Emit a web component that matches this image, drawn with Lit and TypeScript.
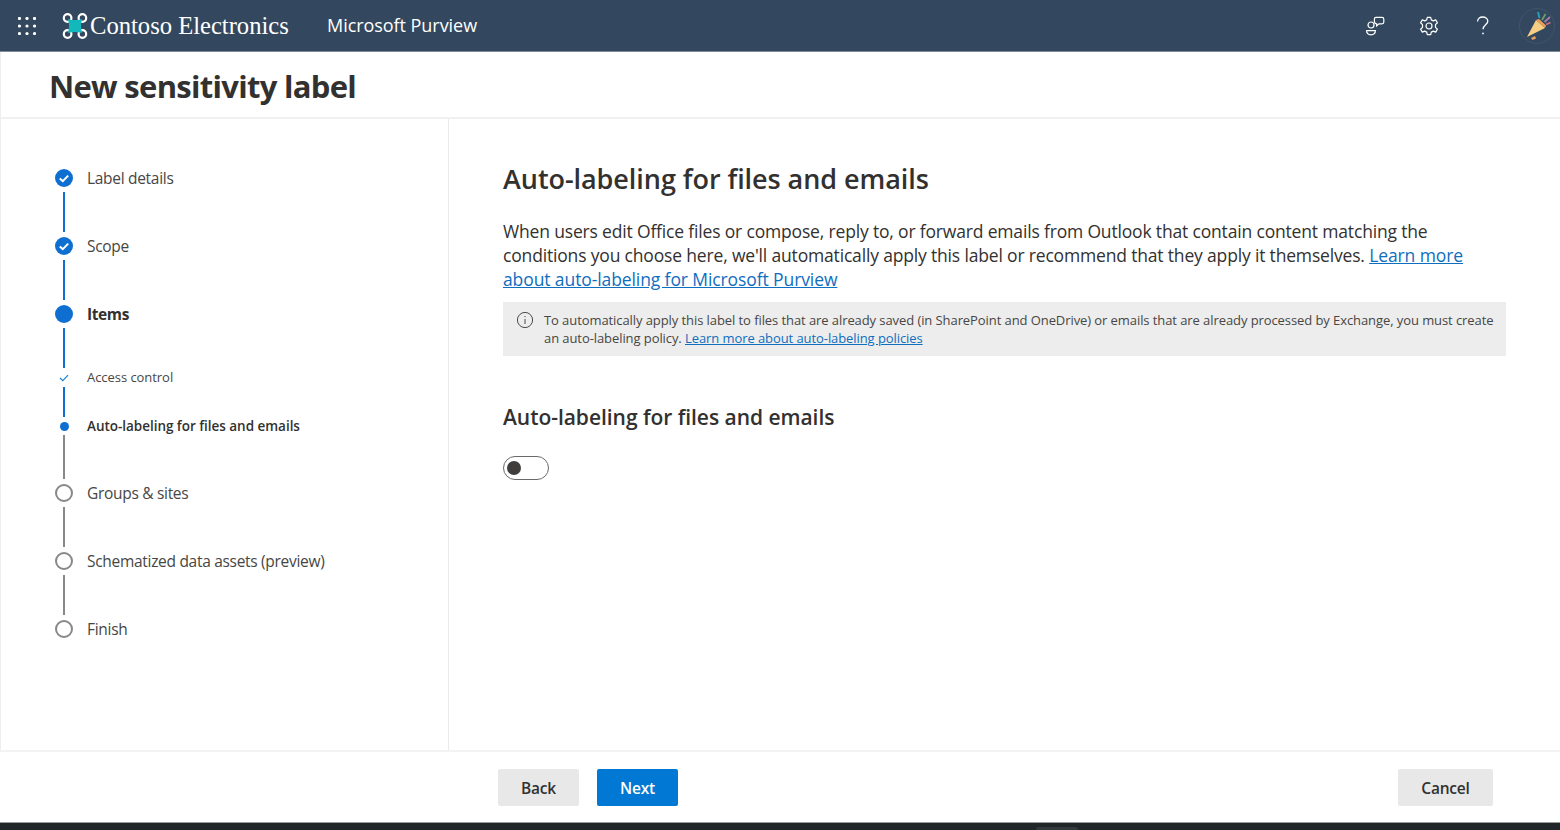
import { html, css, LitElement, svg } from "lit";
import { customElement } from "lit/decorators.js";

interface stepConfig {
  label: string;
  kind: "done" | "current" | "todo" | "subdone" | "subcurrent";
  line?: "blue" | "blue-short" | "blue-tight" | "grey" | "grey-sub";
}

const STEPS: stepConfig[] = [
  { label: "Label details", kind: "done", line: "blue" },
  { label: "Scope", kind: "done", line: "blue" },
  { label: "Items", kind: "current", line: "blue-tight" },
  { label: "Access control", kind: "subdone", line: "blue-short" },
  { label: "Auto-labeling for files and emails", kind: "subcurrent", line: "grey-sub" },
  { label: "Groups & sites", kind: "todo", line: "grey" },
  { label: "Schematized data assets (preview)", kind: "todo", line: "grey" },
  { label: "Finish", kind: "todo" },
];

const waffle = svg`<svg width="18" height="18" viewBox="0 0 18 18" fill="#fff">
  ${[1.5, 9, 16.5].flatMap((y) =>
    [1.5, 9, 16.5].map((x) => svg`<circle cx=${x} cy=${y} r="1.6"></circle>`)
  )}
</svg>`;

const logo = svg`<svg width="26" height="28" viewBox="0 0 26 28" fill="none">
  <circle cx="5.6" cy="6" r="3.8" stroke="#fff" stroke-width="2.2"></circle>
  <circle cx="20.4" cy="6" r="3.8" stroke="#fff" stroke-width="2.2"></circle>
  <circle cx="5.6" cy="22" r="3.8" stroke="#fff" stroke-width="2.2"></circle>
  <circle cx="20.4" cy="22" r="3.8" stroke="#fff" stroke-width="2.2"></circle>
  <path d="M7 8 C10 9.2 16 9.2 19 8 C17.8 11 17.8 17 19 20 C16 18.8 10 18.8 7 20 C8.2 17 8.2 11 7 8 Z" fill="#12b8bb" stroke="#12b8bb" stroke-width="1.8" stroke-linejoin="round"></path>
</svg>`;

const people = svg`<svg width="20" height="20" viewBox="0 0 20 20" fill="none" stroke="#fff" stroke-width="1.2">
  <circle cx="6" cy="9" r="3"></circle>
  <path d="M1.6 14.6 H10.4 C10.4 17.6 8.4 18.8 6 18.8 C3.6 18.8 1.6 17.6 1.6 14.6 Z"></path>
  <path d="M11 1.4 H17 A1.8 1.8 0 0 1 18.8 3.2 V6 A1.8 1.8 0 0 1 17 7.8 H14 L11.6 10 V7.8 A2.4 2.4 0 0 1 9.4 5.6 V3 A1.6 1.6 0 0 1 11 1.4 Z"></path>
</svg>`;

const gear = svg`<svg width="20" height="20" viewBox="0 0 20 20" fill="none" stroke="#fff" stroke-width="1.2">
  <circle cx="10" cy="10" r="3"></circle>
  <path d="M8.3 1.3 H11.7 L12.3 3.9 L14.3 4.9 L16.7 3.9 L18.4 6.8 L16.5 8.6 V11.4 L18.4 13.2 L16.7 16.1 L14.3 15.1 L12.3 16.1 L11.7 18.7 H8.3 L7.7 16.1 L5.7 15.1 L3.3 16.1 L1.6 13.2 L3.5 11.4 V8.6 L1.6 6.8 L3.3 3.9 L5.7 4.9 L7.7 3.9 Z" stroke-linejoin="round"></path>
</svg>`;

const help = svg`<svg width="14" height="20" viewBox="0 0 14 20" fill="none" stroke="#fff" stroke-width="1.3">
  <path d="M1.6 5.4 C1.6 2.8 3.8 1 6.6 1 C9.6 1 11.8 2.9 11.8 5.3 C11.8 8.6 7 9 7 13.2"></path>
  <circle cx="7" cy="17.4" r=".9" fill="#fff" stroke="none"></circle>
</svg>`;

const party = svg`<svg width="36" height="36" viewBox="0 0 36 36" fill="none">
  <circle cx="18" cy="18" r="17.5" stroke="#3f566c"></circle>
  <path d="M8 29 L17 12 L26 20 Z" fill="#f6cf85"></path>
  <path d="M17 12 L26 20 L27 17.5 L20 11 Z" fill="#e9a05c"></path>
  <path d="M12 30 L16 28 L17 30.5 L13.5 32 Z" fill="#e9a05c"></path>
  <path d="M20.5 10 L19 4" stroke="#2aa1b8" stroke-width="1.8"></path>
  <path d="M23 12 L26.5 6" stroke="#6f9c6a" stroke-width="1.8"></path>
  <path d="M25.5 14 L31 9" stroke="#a87ab0" stroke-width="1.8"></path>
  <path d="M27 16.5 L31.5 14.5" stroke="#cf6f86" stroke-width="1.5"></path>
</svg>`;

const check = svg`<svg width="18" height="18" viewBox="0 0 18 18">
  <circle cx="9" cy="9" r="9" fill="#0f6fd1"></circle>
  <path d="M4.8 9.4 L7.8 12.2 L13.2 6.6" fill="none" stroke="#fff" stroke-width="2"></path>
</svg>`;

const smallCheck = svg`<svg width="10" height="8" viewBox="0 0 10 8">
  <path d="M1 4 L3.8 6.6 L9 1.2" fill="none" stroke="#1a82d8" stroke-width="1.2"></path>
</svg>`;

const info = svg`<svg width="18" height="18" viewBox="0 0 18 18" fill="none" stroke="#4a4a4a" stroke-width="1">
  <circle cx="9" cy="9" r="7.6"></circle>
  <path d="M9 8 V13"></path>
  <circle cx="9" cy="5.6" r=".7" fill="#4a4a4a" stroke="none"></circle>
</svg>`;

@customElement("app-root")
export class AppRoot extends LitElement {
  renderNode(kind: stepConfig["kind"]) {
    if (kind === "done") return check;
    if (kind === "subdone") return smallCheck;
    return html`<span class="dot ${kind}"></span>`;
  }

  render() {
    return html`
      <header class="topbar">
        <span class="waffle">${waffle}</span>
        <span class="logo">${logo}</span>
        <span class="brand">Contoso Electronics</span>
        <span class="product">Microsoft Purview</span>
        <span class="spacer"></span>
        <span class="tool">${people}</span>
        <span class="tool">${gear}</span>
        <span class="tool">${help}</span>
        <span class="avatar">${party}</span>
      </header>
      <div class="title"><h1>New sensitivity label</h1></div>
      <div class="body">
        <nav class="steps">
          ${STEPS.map(
            (s) => html`
              <div class="step">
                <div class="rail">
                  <span class="node">${this.renderNode(s.kind)}</span>
                  ${s.line ? html`<span class="line ${s.line}"></span>` : ""}
                </div>
                <span class="label ${s.kind}">${s.label}</span>
              </div>
            `
          )}
        </nav>
        <main class="content">
          <h2>Auto-labeling for files and emails</h2>
          <p class="intro">
            When users edit Office files or compose, reply to, or forward emails from Outlook that contain content matching the
            conditions you choose here, we'll automatically apply this label or recommend that they apply it themselves.
            <a href="#">Learn more about auto-labeling for Microsoft Purview</a>
          </p>
          <div class="notice">
            <span class="notice-icon">${info}</span>
            <span>
              To automatically apply this label to files that are already saved (in SharePoint and OneDrive) or emails that are already processed by Exchange, you must create
              an auto-labeling policy. <a href="#">Learn more about auto-labeling policies</a>
            </span>
          </div>
          <h3>Auto-labeling for files and emails</h3>
          <div class="toggle"><span class="knob"></span></div>
        </main>
      </div>
      <footer class="footer">
        <button class="btn back">Back</button>
        <button class="btn primary">Next</button>
        <span class="spacer"></span>
        <button class="btn cancel">Cancel</button>
      </footer>
      <div class="taskbar"><span class="task"></span></div>
    `;
  }

  static styles = css`
    :host {
      display: flex;
      flex-direction: column;
      height: 830px;
      font-family: "Open Sans", "Noto Sans", sans-serif;
      color: #323130;
      background: #fff;
      overflow: hidden;
    }
    .topbar {
      height: 52px;
      flex: none;
      display: flex;
      align-items: center;
      background: #33485e;
      color: #fff;
      box-sizing: border-box;
      border-bottom: 1px solid #7f8d9a;
    }
    .waffle {
      display: flex;
      margin-left: 18px;
    }
    .logo {
      display: flex;
      margin-left: 26px;
      margin-right: 2px;
    }
    .brand {
      font-family: "Liberation Serif", serif;
      font-size: 24.6px;
      width: 237px;
      white-space: nowrap;
    }
    .product {
      font-size: 18px;
      font-weight: 500;
      letter-spacing: -0.05px;
      padding-bottom: 2px;
    }
    .spacer {
      flex: 1;
    }
    .tool {
      width: 54px;
      display: flex;
      justify-content: center;
    }
    .avatar {
      display: flex;
      margin-left: 9px;
      margin-right: 5px;
    }
    .title {
      height: 67px;
      flex: none;
      box-sizing: border-box;
      display: flex;
      align-items: center;
      padding: 3px 0 0 48px;
      border-bottom: 2px solid #f0f0f0;
      border-left: 1px solid #eee;
    }
    h1 {
      margin: 0;
      font-size: 31px;
      font-weight: 700;
      letter-spacing: -0.7px;
    }
    .body {
      flex: 1;
      display: flex;
      min-height: 0;
    }
    .steps {
      width: 449px;
      flex: none;
      box-sizing: border-box;
      padding: 50px 0 0 54px;
      border-right: 1px solid #eaeaea;
      border-left: 1px solid #eee;
    }
    .step {
      display: flex;
      gap: 14px;
    }
    .rail {
      width: 18px;
      flex: none;
      display: flex;
      flex-direction: column;
      align-items: center;
    }
    .node {
      width: 18px;
      height: 18px;
      display: flex;
      align-items: center;
      justify-content: center;
    }
    .dot.current {
      width: 18px;
      height: 18px;
      border-radius: 50%;
      background: #0f6fd1;
    }
    .dot.subcurrent {
      width: 9px;
      height: 9px;
      border-radius: 50%;
      background: #0f6fd1;
    }
    .dot.todo {
      width: 18px;
      height: 18px;
      box-sizing: border-box;
      border-radius: 50%;
      border: 2px solid #8a8886;
    }
    .line {
      width: 2px;
      display: block;
    }
    .line.blue {
      height: 40px;
      margin: 5px 0;
      background: #0f6fd1;
    }
    .line.blue-tight {
      height: 40px;
      margin: 5px 0 1px;
      background: #0f6fd1;
    }
    .line.blue-short {
      height: 30px;
      background: #0f6fd1;
    }
    .line.grey {
      height: 40px;
      margin: 5px 0;
      background: #8a8886;
    }
    .line.grey-sub {
      height: 44px;
      margin-bottom: 5px;
      background: #8a8886;
    }
    .label {
      font-size: 15.5px;
      line-height: 18px;
      letter-spacing: -0.3px;
      color: #484644;
      white-space: nowrap;
    }
    .label.current {
      font-weight: 700;
      letter-spacing: -0.4px;
      color: #323130;
    }
    .label.subdone {
      font-size: 13px;
      line-height: 16px;
      letter-spacing: -0.05px;
    }
    .label.subcurrent {
      font-size: 13.5px;
      line-height: 18px;
      font-weight: 600;
      letter-spacing: -0.03px;
      color: #323130;
    }
    .content {
      flex: 1;
      box-sizing: border-box;
      padding: 42px 54px 0;
      min-width: 0;
    }
    h2 {
      margin: 0 0 22px;
      font-size: 27px;
      line-height: 36px;
      font-weight: 600;
      letter-spacing: -0.06px;
    }
    .intro {
      margin: 0 0 11px;
      font-size: 17.5px;
      line-height: 24px;
      letter-spacing: -0.17px;
      width: 1003px;
    }
    .intro a {
      letter-spacing: -0.1px;
    }
    a {
      color: #106ebe;
      text-decoration: underline;
    }
    .notice {
      width: 1003px;
      height: 54px;
      box-sizing: border-box;
      background: #ededed;
      display: flex;
      gap: 10px;
      padding: 9px 9px 0 13px;
      font-size: 13px;
      line-height: 18px;
      letter-spacing: -0.08px;
      color: #484644;
    }
    .notice-icon {
      display: flex;
      height: 18px;
      flex: none;
    }
    h3 {
      margin: 46px 0 24px;
      font-size: 21px;
      line-height: 30px;
      font-weight: 600;
      letter-spacing: -0.04px;
    }
    .toggle {
      width: 46px;
      height: 24px;
      box-sizing: border-box;
      border: 1.5px solid #6b6967;
      border-radius: 12px;
      display: flex;
      align-items: center;
      padding-left: 3px;
    }
    .knob {
      width: 14px;
      height: 14px;
      border-radius: 50%;
      background: #3f3e3d;
    }
    .footer {
      height: 72px;
      flex: none;
      box-sizing: border-box;
      display: flex;
      align-items: center;
      gap: 18px;
      padding: 0 67px 0 498px;
      border-top: 2px solid #f3f3f3;
    }
    .btn {
      height: 37px;
      border: none;
      border-radius: 2px;
      font-family: inherit;
      font-size: 15.5px;
      font-weight: 600;
      letter-spacing: -0.2px;
      background: #e8e8e8;
      color: #323130;
      padding: 2px 0 0;
    }
    .back {
      width: 81px;
    }
    .primary {
      width: 81px;
      background: #0078d4;
      color: #fff;
    }
    .cancel {
      width: 95px;
    }
    .taskbar {
      height: 8px;
      flex: none;
      background: #20252a;
      border-top: 1px solid #9a9a9a;
      box-sizing: border-box;
      display: flex;
      padding: 4px 0 0 1036px;
    }
    .task {
      width: 42px;
      background: #33383c;
      border-radius: 3px 3px 0 0;
    }
  `;
}
